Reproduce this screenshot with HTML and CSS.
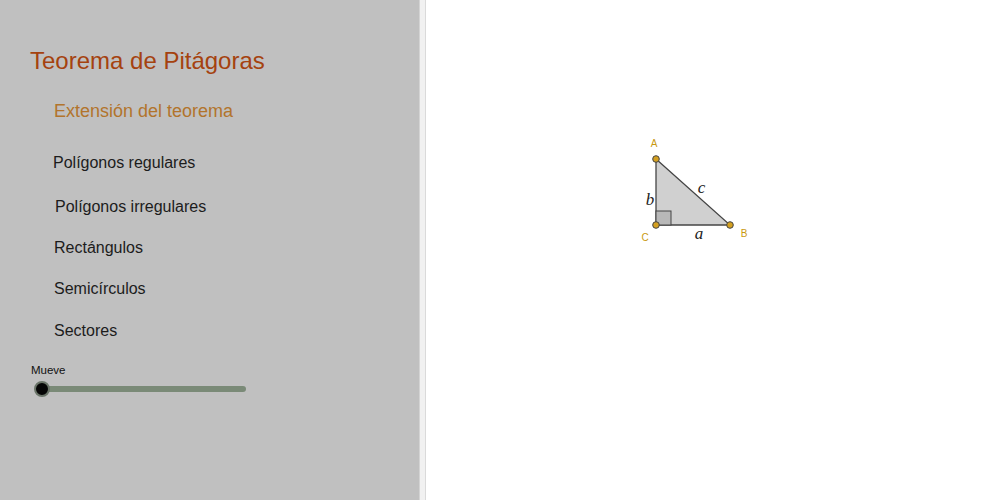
FILE: index.html
```html
<!DOCTYPE html>
<html lang="es">
<head>
  <meta charset="UTF-8" />
  <meta name="viewport" content="width=device-width, initial-scale=1.0" />
  <title>Teorema de Pitágoras</title>
  <link rel="stylesheet" href="styles.css">
</head>
<body>
  <div class="app">
    <div class="panel">
      <div class="title">Teorema de Pitágoras</div>
      <div class="subtitle">Extensión del teorema</div>
      <div class="item item-1">Polígonos regulares</div>
      <div class="item item-2">Polígonos irregulares</div>
      <div class="item item-3">Rectángulos</div>
      <div class="item item-4">Semicírculos</div>
      <div class="item item-5">Sectores</div>
      <div class="slider-label">Mueve</div>
      <div class="slider">
        <div class="track"></div>
        <div class="knob"></div>
      </div>
    </div>
    <div class="divider"></div>
    <div class="canvas">
      <svg class="drawing" width="100%" height="100%">
        <polygon points="230,159 304,225 230,225" fill="#d0d0d0" stroke="#454545" stroke-width="1.3" />
        <rect x="230" y="211" width="15" height="14" fill="#b8b8b8" stroke="#454545" stroke-width="1" />
        <circle cx="230" cy="159" r="3.3" fill="#d4a020" stroke="#444" stroke-width="1" />
        <circle cx="304" cy="225" r="3.3" fill="#d4a020" stroke="#444" stroke-width="1" />
        <circle cx="230" cy="225" r="3.3" fill="#d4a020" stroke="#444" stroke-width="1" />
        <text class="pt-label" x="228" y="146.5" text-anchor="middle">A</text>
        <text class="pt-label" x="318" y="236.5" text-anchor="middle">B</text>
        <text class="pt-label" x="219" y="241" text-anchor="middle">C</text>
        <text class="side-label" x="224" y="205" text-anchor="middle">b</text>
        <text class="side-label" x="275.5" y="193" text-anchor="middle">c</text>
        <text class="side-label" x="273" y="239" text-anchor="middle">a</text>
      </svg>
    </div>
  </div>
</body>
</html>
```

FILE: styles.css
```css
html, body {
  margin: 0;
  height: 100%;
}
body {
  font-family: "Liberation Sans", Arial, sans-serif;
  background-color: #fff;
}
.app {
  display: flex;
  height: 100vh;
}
.panel {
  width: 419px;
  flex: none;
  background-color: #c0c0c0;
  padding-top: 47px;
  box-sizing: border-box;
}
.title {
  font-size: 24px;
  line-height: 28px;
  color: #a5420f;
  margin-left: 30px;
}
.subtitle {
  font-size: 18px;
  line-height: 22px;
  color: #b2742c;
  margin: 25px 0 0 54px;
}
.item {
  font-size: 16px;
  line-height: 20px;
  color: #1c1c1c;
  margin-left: 54px;
}
.item-1 { margin-top: 31px; margin-left: 53px; }
.item-2 { margin-top: 24px; margin-left: 55px; }
.item-3 { margin-top: 21px; }
.item-4 { margin-top: 21px; }
.item-5 { margin-top: 22px; }
.slider-label {
  font-size: 11.5px;
  line-height: 14px;
  color: #111;
  margin: 22px 0 0 31px;
}
.slider {
  position: relative;
  height: 16px;
  margin-top: 4px;
}
.track {
  position: absolute;
  left: 40px;
  top: 5px;
  width: 206px;
  height: 6px;
  border-radius: 3px;
  background-color: #7a8a77;
}
.knob {
  position: absolute;
  left: 34px;
  top: 0;
  width: 12px;
  height: 12px;
  border-radius: 50%;
  background-color: #050505;
  border: 2px solid #6a7468;
}
.divider {
  width: 7px;
  flex: none;
  background-color: #f1f1f1;
  border-left: 1px solid #d4d4d4;
  border-right: 1px solid #dadada;
  box-sizing: border-box;
}
.canvas {
  flex: 1;
  background-color: #fff;
}
.drawing {
  display: block;
}
.pt-label {
  font-family: "Liberation Sans", Arial, sans-serif;
  font-size: 10px;
  fill: #c9990f;
}
.side-label {
  font-family: "Liberation Serif", "Times New Roman", serif;
  font-style: italic;
  font-size: 17px;
  fill: #222;
}
```
